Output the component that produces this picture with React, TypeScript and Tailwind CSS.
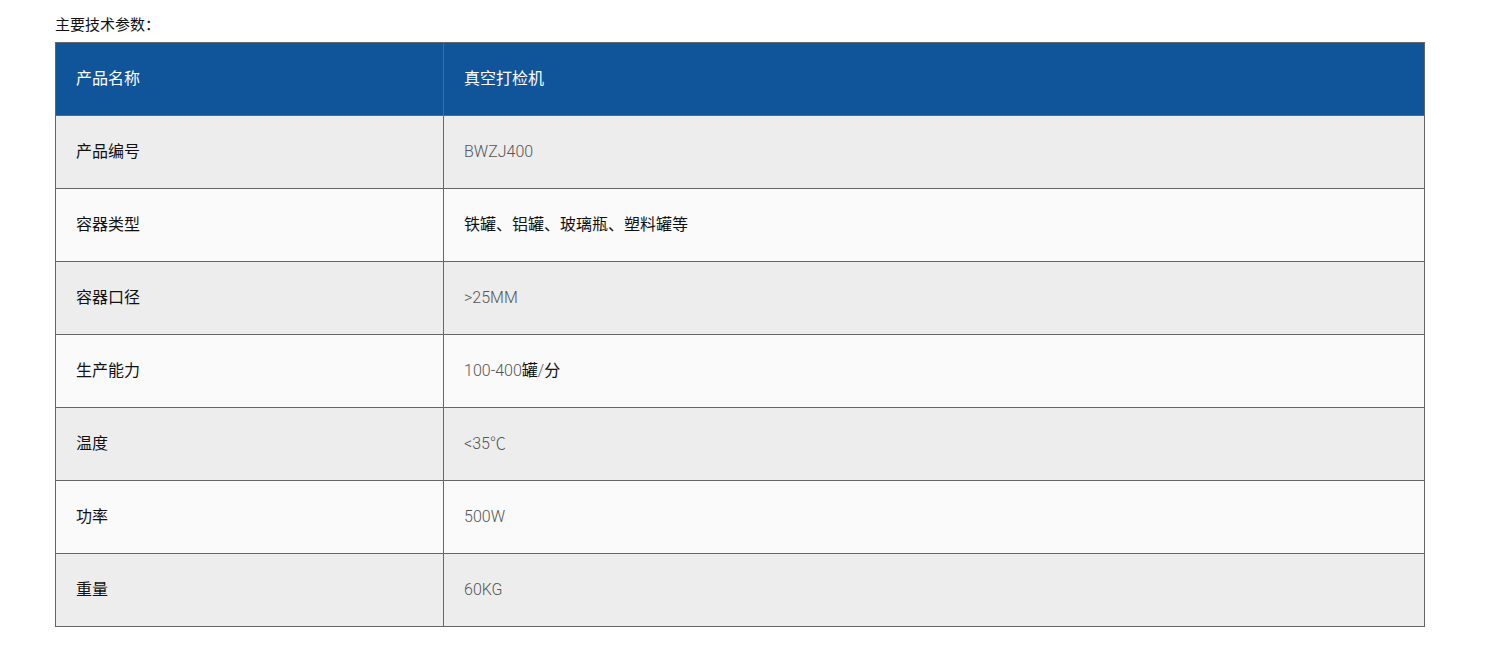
const rows: [string, string][] = [
  ['产品编号', 'BWZJ400'],
  ['容器类型', '铁罐、铝罐、玻璃瓶、塑料罐等'],
  ['容器口径', '>25MM'],
  ['生产能力', '100-400罐/分'],
  ['温度', '<35℃'],
  ['功率', '500W'],
  ['重量', '60KG'],
];

// latin runs look lighter/grey in the reference, CJK stays dark
function Value({ text }: { text: string }) {
  const parts = text.split(/([\u3000-\u303f\u4e00-\u9fff]+)/).filter(Boolean);
  return (
    <>
      {parts.map((p, i) =>
        /[\u3000-\u303f\u4e00-\u9fff]/.test(p) ? (
          <span key={i} className="font-normal text-[#111]">{p}</span>
        ) : (
          <span key={i}>{p}</span>
        ),
      )}
    </>
  );
}

export default function App() {
  return (
    <div className="min-h-screen bg-white px-[55px] pt-[15px] font-['Roboto','Noto_Sans_CJK_SC',sans-serif] text-[16px] text-[#222]">
      <p className="h-[27px] text-[15px] leading-[20px] text-[#111]">主要技术参数：</p>
      <table className="w-[1370px] table-fixed border-collapse">
        <colgroup>
          <col className="w-[388px]" />
          <col />
        </colgroup>
        <thead>
          <tr className="h-[73px] bg-[#10559a] text-white">
            <th className="border border-[#666] px-[20px] text-left font-normal">产品名称</th>
            <th className="border border-[#666] border-l-[#3a6a9c] px-[20px] text-left font-normal">真空打检机</th>
          </tr>
        </thead>
        <tbody>
          {rows.map(([k, v], i) => (
            <tr key={k} className={`h-[73px] ${i % 2 === 0 ? 'bg-[#ededed]' : 'bg-[#fafafa]'}`}>
              <td className="border border-[#666] px-[20px] text-[#111]">{k}</td>
              <td className="border border-[#666] px-[20px] font-light text-[#555]">
                <Value text={v} />
              </td>
            </tr>
          ))}
        </tbody>
      </table>
    </div>
  );
}
